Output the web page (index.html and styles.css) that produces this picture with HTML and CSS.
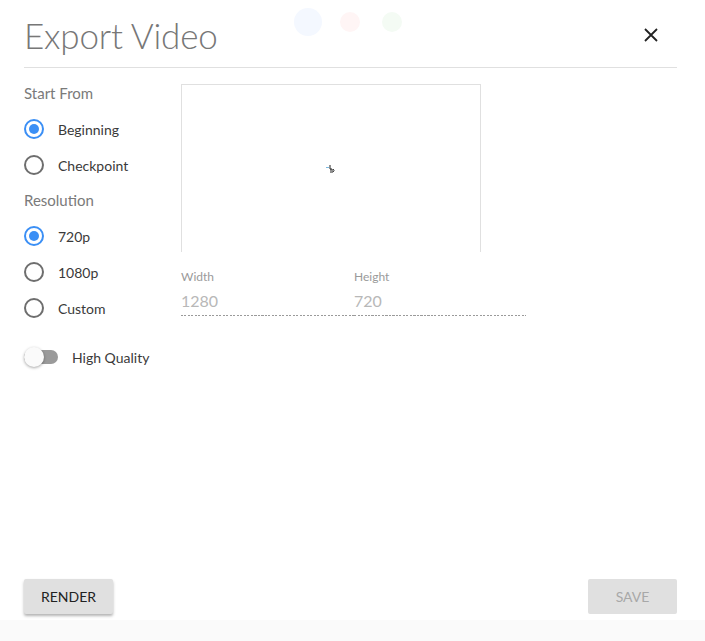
FILE: index.html
```html
<!DOCTYPE html>
<html>
<head>
<meta charset="utf-8">
<link rel="stylesheet" href="styles.css">
</head>
<body>
<div class="dots">
  <span class="dot dot-blue"></span>
  <span class="dot dot-red"></span>
  <span class="dot dot-green"></span>
</div>
<div class="dialog">
  <header class="header">
    <h1 class="title">Export Video</h1>
    <button class="close" aria-label="Close">
      <svg width="14" height="14" viewBox="0 0 14 14"><path d="M1 1 L13 13 M13 1 L1 13" stroke="#222" stroke-width="1.8" fill="none"/></svg>
    </button>
  </header>
  <main class="content">
    <section class="options">
      <div class="group-label">Start From</div>
      <label class="radio-row"><span class="radio checked"></span><span>Beginning</span></label>
      <label class="radio-row"><span class="radio"></span><span>Checkpoint</span></label>
      <div class="group-label second">Resolution</div>
      <label class="radio-row"><span class="radio checked"></span><span>720p</span></label>
      <label class="radio-row"><span class="radio"></span><span>1080p</span></label>
      <label class="radio-row"><span class="radio"></span><span>Custom</span></label>
      <label class="toggle-row"><span class="toggle"><span class="thumb"></span></span><span>High Quality</span></label>
    </section>
    <section class="preview-col">
      <div class="preview">
        <svg class="cursor" width="12" height="10" viewBox="0 0 12 10">
          <path d="M0 3.5 H3" stroke="#7ab8e0" stroke-width="1"/>
          <path d="M4 1 V5 H6 M4 6 H7 M4 8 H7 M7 5 Q9 6.5 7 8" stroke="#222" stroke-width="1" fill="none"/>
        </svg>
      </div>
      <div class="fields">
        <div class="field">
          <div class="field-label">Width</div>
          <div class="field-value">1280</div>
        </div>
        <div class="field">
          <div class="field-label">Height</div>
          <div class="field-value">720</div>
        </div>
      </div>
    </section>
  </main>
  <footer class="footer">
    <button class="btn btn-raised">RENDER</button>
    <button class="btn btn-disabled">SAVE</button>
  </footer>
</div>
<div class="bottom-strip"></div>
</body>
</html>
```
FILE: styles.css
```css
* { box-sizing: border-box; }
html, body {
  margin: 0;
  padding: 0;
  background: #ffffff;
}
body {
  font-family: Lato, "Open Sans", sans-serif;
  width: 705px;
  height: 641px;
  overflow: hidden;
  position: relative;
}
.dots {
  position: absolute;
  top: 8px;
  left: 294px;
  display: flex;
  align-items: center;
}
.dot { display: block; border-radius: 50%; }
.dot-blue { width: 28px; height: 28px; background: #f4f8ff; }
.dot-red { width: 20px; height: 20px; background: #fff5f5; margin-left: 18px; }
.dot-green { width: 20px; height: 20px; background: #f4fbf4; margin-left: 22px; }

.dialog {
  height: 620px;
  display: flex;
  flex-direction: column;
  padding: 0 28px 0 24px;
  position: relative;
}
.header {
  display: flex;
  align-items: center;
  justify-content: space-between;
  height: 68px;
  padding-top: 2px;
  border-bottom: 1px solid #e0e0e0;
}
.title {
  margin: 0;
  font-size: 35px;
  font-weight: 300;
  color: #777;
  line-height: 40px;
  letter-spacing: -0.2px;
}
.close {
  background: none;
  border: 0;
  padding: 0;
  width: 14px;
  height: 14px;
  margin-right: 19px;
  display: flex;
}
.content {
  display: flex;
  flex: 1;
}
.options {
  width: 157px;
  padding-top: 14px;
  display: flex;
  flex-direction: column;
}
.group-label {
  font-size: 15px;
  line-height: 22px;
  color: #7a7a7a;
  margin-bottom: 7px;
}
.group-label.second {
  margin-top: 6px;
}
.radio-row {
  display: flex;
  align-items: center;
  height: 36px;
  font-size: 14px;
  color: #3a3a3a;
  gap: 14px;
}
.radio {
  width: 20px;
  height: 20px;
  border-radius: 50%;
  border: 2px solid #6e6e6e;
  display: flex;
  align-items: center;
  justify-content: center;
}
.radio.checked { border-color: #3b8ff5; }
.radio.checked::after {
  content: "";
  width: 10px;
  height: 10px;
  border-radius: 50%;
  background: #3b8ff5;
}
.toggle-row {
  display: flex;
  align-items: center;
  height: 24px;
  margin-top: 19px;
  font-size: 14px;
  color: #3a3a3a;
  gap: 14px;
}
.toggle {
  width: 34px;
  height: 14px;
  border-radius: 7px;
  background: #9a9a9a;
  position: relative;
}
.thumb {
  position: absolute;
  left: 0;
  top: -3px;
  width: 20px;
  height: 20px;
  border-radius: 50%;
  background: #fafafa;
  box-shadow: 0 1px 3px rgba(0,0,0,0.35);
}
.preview-col {
  padding-top: 16px;
  display: flex;
  flex-direction: column;
}
.preview {
  width: 300px;
  height: 168px;
  border: 1px solid #e0e0e0;
  border-bottom: 0;
  display: flex;
  align-items: center;
  justify-content: center;
}
.cursor { margin-left: 2px; }
.fields {
  display: flex;
  margin-top: 17px;
}
.field {
  width: 173px;
  padding-bottom: 4px;
  background-image: repeating-linear-gradient(to right, #9a9a9a 0 2px, transparent 2px 3.5px);
  background-size: 100% 1px;
  background-repeat: no-repeat;
  background-position: left bottom;
}
.field + .field { width: 172px; }
.field-label {
  font-size: 12px;
  line-height: 16px;
  color: #9a9a9a;
}
.field-value {
  font-size: 16px;
  line-height: 22px;
  color: #b8b8b8;
  margin-top: 5px;
}
.footer {
  display: flex;
  justify-content: space-between;
  padding-bottom: 6px;
}
.btn {
  font-family: Lato, "Open Sans", sans-serif;
  font-size: 14px;
  border: 0;
  border-radius: 2px;
  height: 35px;
  width: 89px;
  background: #e0e0e0;
  padding: 0;
}
.btn-raised {
  color: #222;
  box-shadow: 0 2px 3px rgba(0,0,0,0.3);
}
.btn-disabled {
  color: #a8a8a8;
}
.bottom-strip {
  height: 21px;
  background: #fafafa;
}
```
